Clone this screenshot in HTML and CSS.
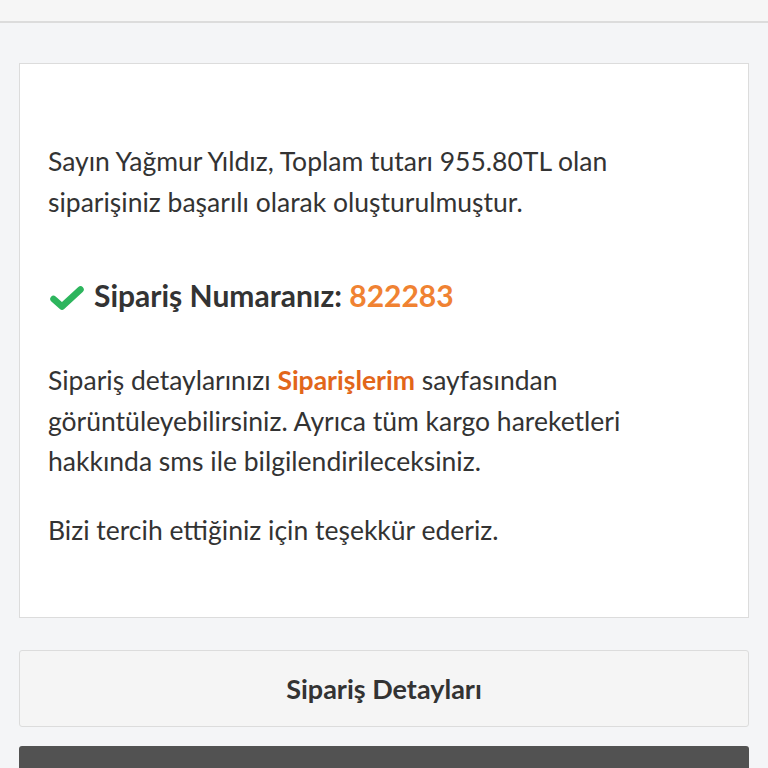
FILE: index.html
```html
<!DOCTYPE html>
<html lang="tr">
<head>
  <meta charset="UTF-8">
  <meta name="viewport" content="width=device-width, initial-scale=1.0">
  <title>Siparişiniz Alındı</title>
  <link rel="stylesheet" href="styles.css">
</head>
<body>
  <header class="top-bar"></header>

  <main class="content">
    <div class="order-card">
      <p class="order-text intro">Sayın Yağmur Yıldız, Toplam tutarı 955.80TL olan siparişiniz başarılı olarak oluşturulmuştur.</p>

      <h2 class="order-number">
        <svg class="check-icon" viewBox="0 0 34 26" width="34" height="26">
          <path d="M3.5 14 L12 21.5 L30.5 4.5" fill="none" stroke="#2db55d" stroke-width="6.5" stroke-linecap="round" stroke-linejoin="round"/>
        </svg>
        <span>Sipariş Numaranız: <span class="number">822283</span></span>
      </h2>

      <p class="order-text">Sipariş detaylarınızı <a href="#" class="link">Siparişlerim</a> sayfasından görüntüleyebilirsiniz. Ayrıca tüm kargo hareketleri hakkında sms ile bilgilendirileceksiniz.</p>

      <p class="order-text last">Bizi tercih ettiğiniz için teşekkür ederiz.</p>
    </div>

    <button class="btn btn-light">Sipariş Detayları</button>
    <button class="btn btn-dark">Alışverişe Devam Et</button>
  </main>
</body>
</html>
```

FILE: styles.css
```css
* {
  box-sizing: border-box;
}

body {
  margin: 0;
  padding: 0;
  font-family: "Lato", "Open Sans", sans-serif;
  background-color: #f4f5f7;
  color: #333;
}

.top-bar {
  height: 23px;
  background-color: #f6f6f6;
  border-bottom: 2px solid #dcdcdc;
}

.content {
  padding: 40px 19px 0;
  display: flex;
  flex-direction: column;
}

.order-card {
  background-color: #fff;
  border: 1px solid #dcdcdc;
  padding: 77px 28px 67px;
}

.order-text {
  margin: 0 0 28px;
  font-size: 26.5px;
  line-height: 40.5px;
}

.order-text.intro {
  margin-bottom: 53px;
}

.order-text.last {
  margin-bottom: 0;
}

.order-number {
  display: flex;
  align-items: center;
  gap: 10px;
  margin: 0 0 44px;
  font-size: 30px;
  line-height: 41px;
  font-weight: 700;
}

.check-icon {
  margin-left: 2px;
  margin-top: 5px;
  flex-shrink: 0;
}

.number {
  color: #f08232;
}

.link {
  color: #e2661a;
  font-weight: 700;
  text-decoration: none;
}

.btn {
  display: block;
  width: 100%;
  border-radius: 3px;
  font-family: inherit;
  font-size: 27px;
  font-weight: 700;
  cursor: pointer;
}

.btn-light {
  margin-top: 32px;
  height: 77px;
  background-color: #f5f5f5;
  border: 1px solid #dcdcdc;
  color: #333;
}

.btn-dark {
  margin-top: 19px;
  height: 77px;
  background-color: #525252;
  border: none;
  color: #fff;
}
```
